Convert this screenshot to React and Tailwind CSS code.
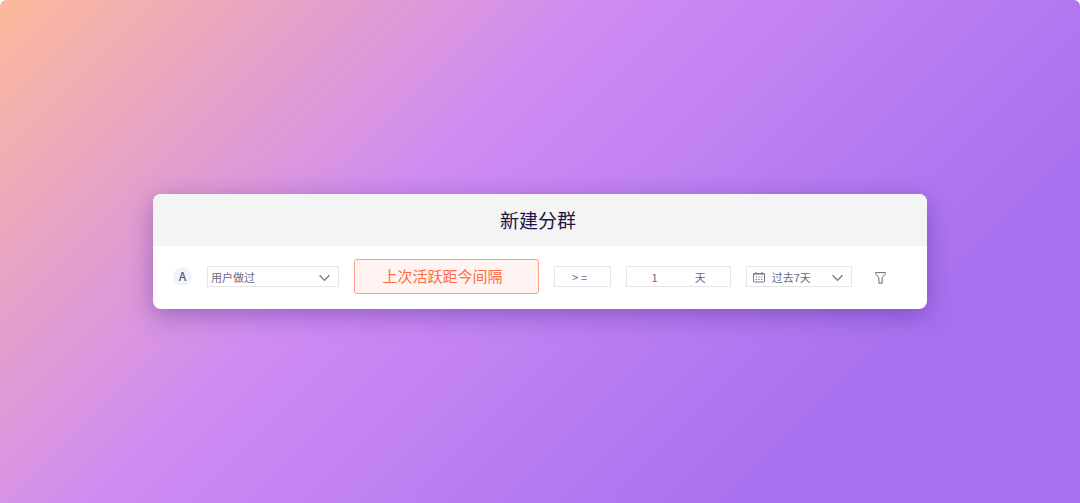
const EVENTS = ["用户做过", "用户没做过"];
const RANGES = ["过去7天", "过去30天"];

export default function App() {
  return (
    <div className="min-h-screen flex items-center rounded-t-md px-4 md:px-[153px] bg-[linear-gradient(135deg,#fdb99b_0%,#cf8bf3_38%,#a770ef_80%)] font-['Noto_Sans_CJK_SC','Noto_Sans',sans-serif]">
      <section className="w-full rounded-lg overflow-hidden bg-white shadow-[0_6px_24px_rgba(60,30,130,0.4)]">
        <header className="h-[52px] flex items-center justify-center pr-1 bg-[#f4f4f4]">
          <h1 className="text-[19px] leading-6 text-[#1c1446]">新建分群</h1>
        </header>

        <form className="flex items-center gap-[15px] pt-[13px] pb-[15px] pl-5 pr-[41px] text-[11px] leading-4 text-[#6b6783]">
          <span className="size-[19px] shrink-0 flex items-center justify-center rounded-full bg-[#f1f3fb] pb-0.5 text-xs font-medium text-[#5a5678]">
            A
          </span>

          <Field className="flex-[132_1_0%]">
            <Select label="用户行为" options={EVENTS} className="pl-[3px]" />
          </Field>

          <button
            type="button"
            className="flex-[186_1_0%] h-[35px] pb-px rounded-[3px] border border-[#ff9f88] bg-[#fff4f1] text-[15px] text-[#ff6a45] whitespace-nowrap"
          >
            <span className="pr-2">上次活跃距今间隔</span>
          </button>

          <button
            type="button"
            className="flex-[56_1_0%] h-[21px] border border-[#e6e6ea] whitespace-nowrap"
          >
            <span className="pr-1.5">&gt; =</span>
          </button>

          <Field className="flex-[104_1_0%]">
            <input
              id="interval"
              type="text"
              inputMode="numeric"
              defaultValue="1"
              className="min-w-0 flex-1 text-center outline-none"
            />
            <label htmlFor="interval" className="w-12 shrink-0 pl-[13px]">天</label>
          </Field>

          <Field className="flex-[106_1_0%]">
            <CalendarIcon />
            <Select label="时间范围" options={RANGES} className="pl-[7px]" />
          </Field>

          <button type="button" aria-label="筛选" className="ml-2 shrink-0 pt-0.5">
            <FilterIcon />
          </button>
        </form>
      </section>
    </div>
  );
}

function Field({ className, children }) {
  return (
    <div className={`flex items-center min-w-0 h-[21px] border border-[#e6e6ea] ${className}`}>
      {children}
    </div>
  );
}

function Select({ label, options, className }) {
  return (
    <div className="relative flex-1 min-w-0 flex items-center">
      <select
        aria-label={label}
        className={`w-full appearance-none outline-none ${className}`}
      >
        {options.map((o) => (
          <option key={o}>{o}</option>
        ))}
      </select>
      <svg
        className="absolute right-2 top-1/2 mt-px -translate-y-1/2 pointer-events-none"
        width="11"
        height="7"
        viewBox="0 0 11 7"
        fill="none"
        stroke="#77738c"
        strokeWidth="1.3"
      >
        <path d="M.6.8 5.5 5.9 10.4.8" />
      </svg>
    </div>
  );
}

function CalendarIcon() {
  return (
    <svg className="ml-1.5 mt-px shrink-0" width="12" height="11" viewBox="0 0 12 11" fill="none" stroke="#77738c">
      <rect x=".5" y="1.5" width="11" height="8.5" rx=".6" />
      <path d="M.5 2h11" />
      <path d="M3 0v2.5M9 0v2.5" />
      <path d="M2.7 5h7M2.7 7.5h7" strokeDasharray="1.3 1.4" />
    </svg>
  );
}

function FilterIcon() {
  return (
    <svg width="11" height="12" viewBox="0 0 11 12" fill="none" stroke="#6b6579">
      <path d="M.6.6h9.8v1.2L7.1 5.8v5.4H3.9V5.8L.6 1.8Z" strokeLinejoin="round" />
    </svg>
  );
}
